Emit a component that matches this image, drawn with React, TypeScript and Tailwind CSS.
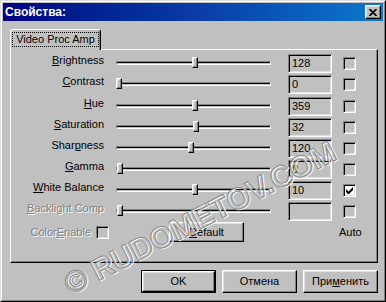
import type { ReactNode } from "react";

type Row = {
  label: string;
  key: number;
  value: string;
  thumb: number;
  checked?: boolean;
  disabled?: boolean;
  gap?: boolean;
};

const ROWS: Row[] = [
  { label: "Brightness", key: 0, value: "128", thumb: 76 },
  { label: "Contrast", key: 0, value: "0", thumb: 0 },
  { label: "Hue", key: 0, value: "359", thumb: 76, gap: true },
  { label: "Saturation", key: 0, value: "32", thumb: 77 },
  { label: "Sharpness", key: 4, value: "120", thumb: 72 },
  { label: "Gamma", key: 0, value: "0", thumb: 1 },
  { label: "White Balance", key: 0, value: "10", thumb: 76, checked: true },
  { label: "Backlight Comp", key: 0, value: "", thumb: 1, disabled: true },
];

const DISABLED = "text-[#808080] [text-shadow:1px_1px_0_#ffffff]";
const SUNKEN =
  "border border-t-[#808080] border-l-[#808080] border-r-white border-b-white shadow-[inset_1px_1px_0_#000000,inset_-1px_-1px_0_#dfdfdf]";
const RAISED =
  "border border-t-white border-l-white border-r-black border-b-black shadow-[inset_-1px_-1px_0_#808080,inset_1px_1px_0_#dfdfdf]";

function Label({ text, at }: { text: string; at: number }) {
  return (
    <span>
      {text.slice(0, at)}
      <span className="underline underline-offset-[1px]">{text[at]}</span>
      {text.slice(at + 1)}
    </span>
  );
}

function Check({ checked }: { checked?: boolean }) {
  return (
    <div
      className={`flex h-[13px] w-[13px] shrink-0 items-center justify-center ${SUNKEN} ${
        checked ? "bg-white" : "bg-[#c0c0c0]"
      }`}
    >
      {checked && (
        <svg width="7" height="7" viewBox="0 0 7 7">
          <path d="M0 2 L0 5 L2 7 L3 7 L7 3 L7 0 L2.5 4.5 Z" fill="#000" />
        </svg>
      )}
    </div>
  );
}

function Slider({ thumb }: { thumb: number }) {
  return (
    <div className="relative mb-[2px] ml-[12px] flex h-[11px] w-[155px] items-center">
      {/* groove */}
      <div className="h-[4px] w-full border border-t-[#808080] border-l-[#808080] border-r-white border-b-white shadow-[inset_0_1px_0_#000000]" />
      {/* thumb */}
      <div
        className={`absolute top-0 h-[11px] w-[6px] bg-[#c0c0c0] ${RAISED}`}
        style={{ left: thumb }}
      />
    </div>
  );
}

function Button({
  children,
  def,
  className,
}: {
  children: ReactNode;
  def?: boolean;
  className: string;
}) {
  const face = (
    <div className={`flex h-full w-full items-center justify-center ${RAISED}`}>{children}</div>
  );
  return def ? (
    <div className={`border border-black ${className}`}>{face}</div>
  ) : (
    <div className={className}>{face}</div>
  );
}

export default function App() {
  return (
    <div className="relative h-[302px] w-[386px] overflow-hidden bg-[#c0c0c0] font-['Liberation_Sans',Arial,sans-serif] text-[11px] leading-normal text-black">
      <div className="h-full border border-t-[#dfdfdf] border-l-[#dfdfdf] border-r-black border-b-black">
        <div className="flex h-full flex-col border border-t-white border-l-white border-r-[#808080] border-b-[#808080] p-px">
          {/* Title bar */}
          <div className="flex h-[18px] shrink-0 items-center justify-between bg-linear-to-r from-[#000080] via-[#0c3aa6] to-[#1078cc] pl-[2px]">
            <span className="text-[12px] font-bold text-white">Свойства:</span>
            <div className={`mr-[2px] flex h-[14px] w-[16px] items-center justify-center bg-[#c0c0c0] ${RAISED}`}>
              <svg width="8" height="7" viewBox="0 0 8 7">
                <path d="M0.5 0 L7.5 7 M7.5 0 L0.5 7" stroke="#000" strokeWidth="1.6" />
              </svg>
            </div>
          </div>

          {/* Body */}
          <div className="flex flex-col pl-[7px] pr-[5px] pt-[8px]">
            {/* Tab strip */}
            <div className="flex">
              <div className="relative z-10 -mb-px flex h-[21px] w-[91px] justify-center rounded-t-[3px] border border-b-0 border-t-white border-l-white border-r-black bg-[#c0c0c0] pt-[2px] shadow-[inset_-1px_0_0_#808080]">
                <div className="flex h-[15px] w-[87px] items-center justify-center border border-dotted border-black">
                  Video Proc Amp
                </div>
              </div>
            </div>

            {/* Tab panel */}
            <div className="flex h-[214px] flex-col border border-t-white border-l-white border-r-black border-b-black pt-[3px] shadow-[inset_-1px_-1px_0_#808080]">
              {ROWS.map((r) => (
                <div
                  key={r.label}
                  className={`flex h-[21px] shrink-0 items-center ${r.gap ? "mt-px" : ""}`}
                >
                  <div
                    className={`mb-[6px] w-[93px] text-right ${r.disabled ? DISABLED : ""}`}
                  >
                    <Label text={r.label} at={r.key} />
                  </div>
                  <Slider thumb={r.thumb} />
                  <div className={`ml-[17px] flex h-[19px] w-[44px] items-center pl-[3px] ${SUNKEN}`}>
                    {r.value}
                  </div>
                  <div className="ml-[11px]">
                    <Check checked={r.checked} />
                  </div>
                </div>
              ))}

              {/* Color enable / Default / Auto */}
              <div className="flex h-[20px] items-center">
                <div className="flex w-[98px] items-center justify-end gap-[5px]">
                  <span className={DISABLED}>
                    <Label text="ColorEnable" at={5} />
                  </span>
                  <Check />
                </div>
                <Button className="ml-[60px] h-[20px] w-[75px]">
                  <Label text="Default" at={0} />
                </Button>
                <span className="ml-[95px]">Auto</span>
              </div>
            </div>

            {/* Dialog buttons */}
            <div className="mt-[7px] flex justify-end gap-[6px]">
              <Button def className="h-[23px] w-[75px]">
                OK
              </Button>
              <Button className="h-[23px] w-[75px]">Отмена</Button>
              <Button className="h-[23px] w-[75px]">
                <Label text="Применить" at={3} />
              </Button>
            </div>
          </div>
        </div>
      </div>

      {/* Watermark */}
      <div className="pointer-events-none absolute left-[200px] top-[218px]">
        <div className="-translate-x-1/2 -translate-y-1/2 -rotate-[27deg] whitespace-nowrap text-[30px] font-bold leading-none">
          <span className="absolute left-px top-px text-transparent [-webkit-text-stroke:1px_#ffffff]">
            © RUDOMETOV.COM
          </span>
          <span className="relative text-transparent [-webkit-text-stroke:1px_#8c8c8c]">
            © RUDOMETOV.COM
          </span>
        </div>
      </div>
    </div>
  );
}
